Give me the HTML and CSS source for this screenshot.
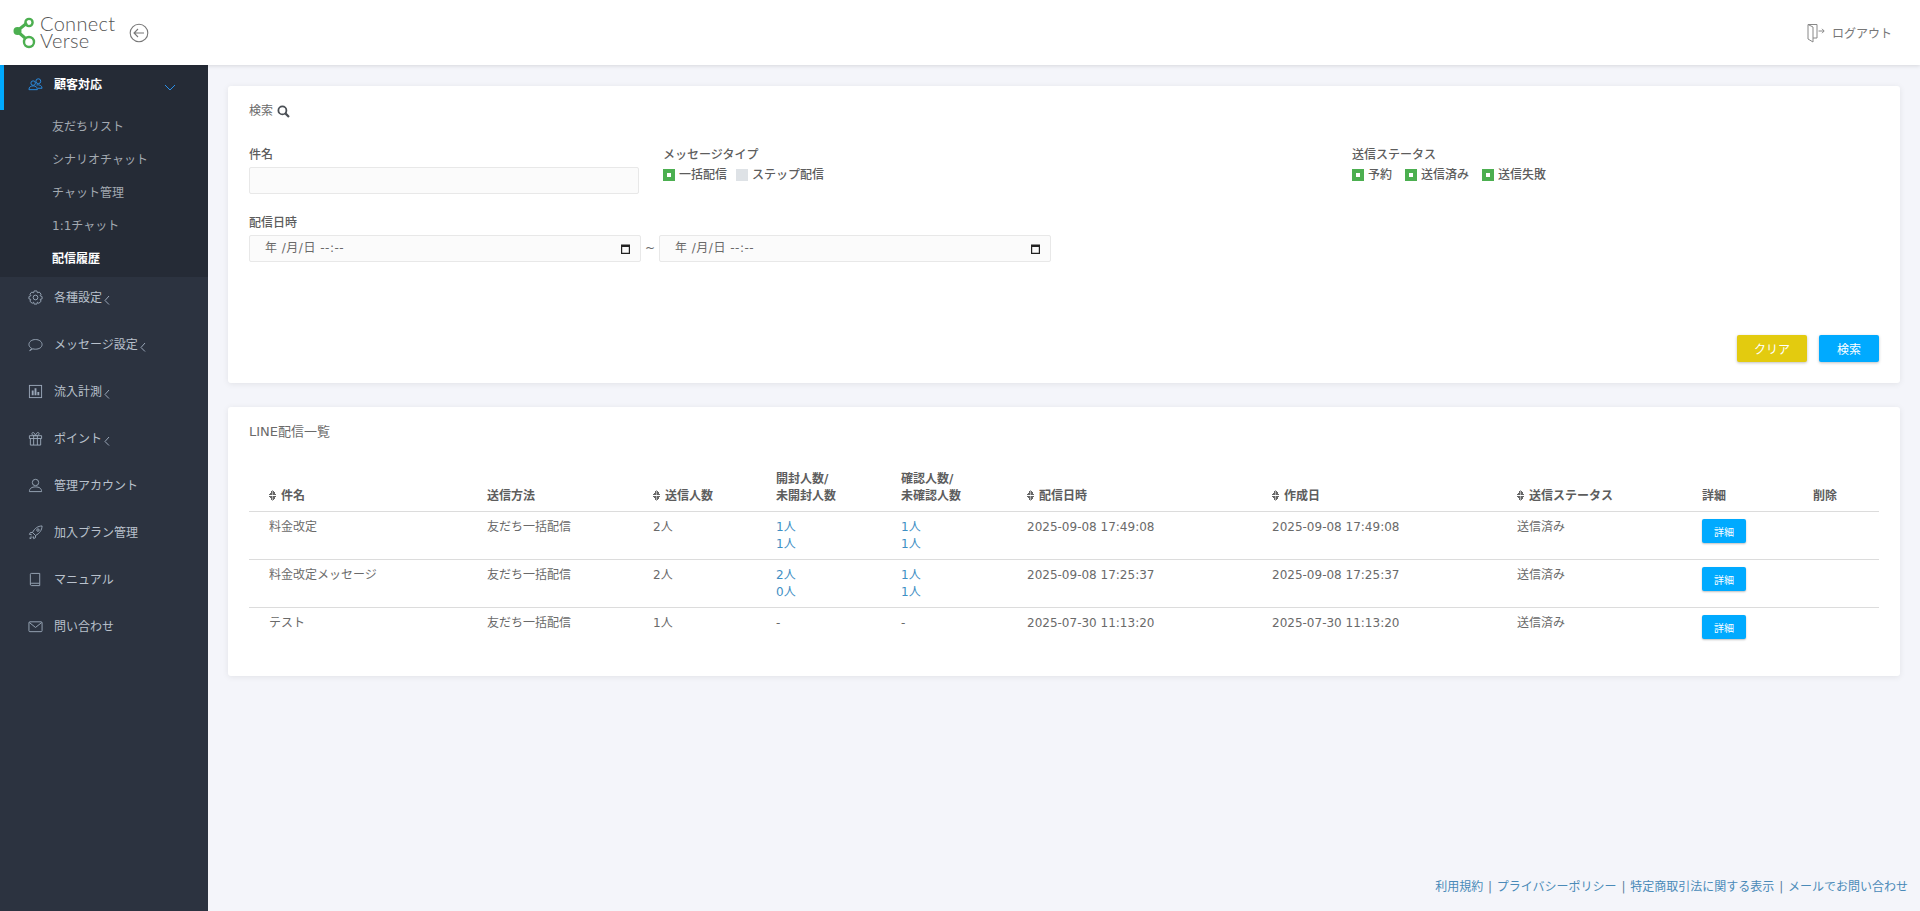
FILE: index.html
```html
<!DOCTYPE html>
<html lang="ja">
<head>
    <meta charset="UTF-8">
    <meta name="viewport" content="width=device-width, initial-scale=1.0">
    <title>配信履歴</title>
    <link rel="stylesheet" href="styles.css">
</head>
<body>

    <header class="topbar">
        <div class="brand">
            <svg class="brand-mark" width="24" height="32" viewBox="0 0 24 32" fill="none">
                <path d="M4 14 L14 6 M4 14 L12 21" stroke="#4caf50" stroke-width="3"/>
                <circle cx="4.5" cy="14" r="4" fill="#4caf50"/>
                <circle cx="16" cy="5.5" r="3.6" stroke="#4caf50" stroke-width="2.4"/>
                <circle cx="16" cy="25" r="5" stroke="#4caf50" stroke-width="2.4"/>
            </svg>
            <div class="brand-name"><span>Connect</span><span>Verse</span></div>
            <svg class="back-icon" width="20" height="20" viewBox="0 0 20 20" fill="none" stroke="#777" stroke-width="1.1">
                <circle cx="10" cy="10" r="8.8"/>
                <path d="M15 10 H5 M9 6 L5 10 L9 14"/>
            </svg>
        </div>
        <a class="logout">
            <svg width="18" height="20" viewBox="0 0 18 20" fill="none" stroke="#888" stroke-width="1">
                <path d="M1 1.5 H10 V15 H6 M1 1.5 V16 L6 19 V4 L1 1.5"/>
                <path d="M11.5 8 H17 M15 5.8 L17.2 8 L15 10.2"/>
            </svg>
            <span>ログアウト</span>
        </a>
    </header>

    <div class="layout">
        <!-- Sidebar -->
        <nav class="sidebar">
            <div class="menu-open">
                <a class="menu-item active">
                    <svg class="menu-icon" viewBox="0 0 16 16" fill="none" stroke="#2a8fe8" stroke-width="1"><circle cx="5.5" cy="6.5" r="2.4"/><circle cx="11" cy="4.5" r="2.6"/><path d="M1 13.5 C1 10.5 3 9.5 5.5 9.5 C8 9.5 10 10.5 10 13.5 Z M9 8.5 C12 7.8 15 9 15 12 H10.5"/></svg>
                    <span>顧客対応</span>
                    <svg class="chevron-down" width="12" height="7" viewBox="0 0 12 7" fill="none" stroke="#2a8fe8"><path d="M1 1 L6 6 L11 1"/></svg>
                </a>
                <ul class="submenu">
                    <li>友だちリスト</li>
                    <li>シナリオチャット</li>
                    <li>チャット管理</li>
                    <li>1:1チャット</li>
                    <li class="current">配信履歴</li>
                </ul>
            </div>
            <a class="menu-item">
                <svg class="menu-icon" viewBox="0 0 16 16" fill="none" stroke="#9aa7b8"><path d="M6.5 1 H9.5 L10 3 L12 2.2 L14 4.5 L12.8 6 L15 7 V9.5 L13 10 L14 12 L11.5 14.2 L10 13 L9.5 15 H6.5 L6 13 L4.5 14.2 L2 12 L3 10 L1 9.5 V7 L3.2 6 L2 4.5 L4 2.2 L6 3 Z"/><circle cx="8" cy="8" r="2.5"/></svg>
                <span>各種設定</span>
                <svg class="chevron-left" width="6" height="10" viewBox="0 0 6 10" fill="none" stroke="#9aa7b8"><path d="M5 1 L1 5.5 L5 9.5"/></svg>
            </a>
            <a class="menu-item">
                <svg class="menu-icon" viewBox="0 0 16 16" fill="none" stroke="#9aa7b8"><path d="M4 12.2 C2 11.2 1 9.6 1 8 C1 5 4 2.7 8 2.7 C12 2.7 15 5 15 8 C15 11 12 13 8 13 C7 13 6 12.9 5.2 12.6 L1.8 14.6 Z"/></svg>
                <span>メッセージ設定</span>
                <svg class="chevron-left" width="6" height="10" viewBox="0 0 6 10" fill="none" stroke="#9aa7b8"><path d="M5 1 L1 5.5 L5 9.5"/></svg>
            </a>
            <a class="menu-item">
                <svg class="menu-icon" viewBox="0 0 16 16" fill="none" stroke="#9aa7b8"><rect x="1.5" y="1.5" width="13" height="13"/><path d="M5 12 V7 M8 12 V4.5 M11 12 V8.5" stroke-width="2"/></svg>
                <span>流入計測</span>
                <svg class="chevron-left" width="6" height="10" viewBox="0 0 6 10" fill="none" stroke="#9aa7b8"><path d="M5 1 L1 5.5 L5 9.5"/></svg>
            </a>
            <a class="menu-item">
                <svg class="menu-icon" viewBox="0 0 16 16" fill="none" stroke="#9aa7b8"><path d="M1.5 5 H14.5 V8 H1.5 Z M2.5 8 V15 H13.5 V8 M6 5 V15 M10 5 V15 M8 5 C5 5 3.5 3.5 4.5 2 C5.5 0.8 7.5 2.5 8 5 C8.5 2.5 10.5 0.8 11.5 2 C12.5 3.5 11 5 8 5 Z"/></svg>
                <span>ポイント</span>
                <svg class="chevron-left" width="6" height="10" viewBox="0 0 6 10" fill="none" stroke="#9aa7b8"><path d="M5 1 L1 5.5 L5 9.5"/></svg>
            </a>
            <a class="menu-item">
                <svg class="menu-icon" viewBox="0 0 16 16" fill="none" stroke="#9aa7b8"><circle cx="8" cy="4.8" r="3.4"/><path d="M1.5 14.5 C1.5 11 4 9.5 8 9.5 C12 9.5 14.5 11 14.5 14.5 Z"/></svg>
                <span>管理アカウント</span>
            </a>
            <a class="menu-item">
                <svg class="menu-icon" viewBox="0 0 16 16" fill="none" stroke="#9aa7b8"><path d="M15 1 C10.5 1.2 7 3.5 4.8 8 L8 11.2 C12.5 9 14.8 5.5 15 1 Z"/><circle cx="10.6" cy="5.4" r="1.3"/><path d="M4.8 8 L2.5 8 L1.5 10 L4 10.5 M8 11.2 L8 13.5 L6 14.5 L5.5 12 M3.5 12 C2.5 12.5 2 14 2 14.5 C3 14.5 4 14 4.5 13"/></svg>
                <span>加入プラン管理</span>
            </a>
            <a class="menu-item">
                <svg class="menu-icon" viewBox="0 0 16 16" fill="none" stroke="#9aa7b8"><path d="M2.5 13 V2.5 C2.5 1.8 3 1.5 3.5 1.5 H12.5 V12 H3.8 C3 12 2.5 12.5 2.5 13 C2.5 13.8 3 14.5 3.8 14.5 H12.5 V12"/></svg>
                <span>マニュアル</span>
            </a>
            <a class="menu-item">
                <svg class="menu-icon" viewBox="0 0 16 16" fill="none" stroke="#9aa7b8"><rect x="1" y="3" width="14" height="10.5" rx="1"/><path d="M1.5 3.8 L8 9 L14.5 3.8"/></svg>
                <span>問い合わせ</span>
            </a>
        </nav>

        <main class="content">
            <!-- Search -->
            <section class="card search-card">
                <div class="search-title">
                    <span>検索</span>
                    <svg width="13" height="13" viewBox="0 0 13 13" fill="none" stroke="#4a4f55" stroke-width="1.8"><circle cx="5.4" cy="5.4" r="4"/><path d="M8.4 8.4 L12 12" stroke-width="2.2"/></svg>
                </div>
                <div class="search-grid">
                    <div class="field">
                        <label class="field-label">件名</label>
                        <input class="text-input" type="text">
                    </div>
                    <div class="field">
                        <label class="field-label">メッセージタイプ</label>
                        <div class="checks">
                            <span class="check on">一括配信</span>
                            <span class="check">ステップ配信</span>
                        </div>
                    </div>
                    <div class="field">
                        <label class="field-label">送信ステータス</label>
                        <div class="checks wide">
                            <span class="check on">予約</span>
                            <span class="check on">送信済み</span>
                            <span class="check on">送信失敗</span>
                        </div>
                    </div>
                </div>
                <div class="field date-field">
                    <label class="field-label">配信日時</label>
                    <div class="date-range">
                        <div class="date-input"><span>年 /月/日 --:--</span><svg width="9" height="10" viewBox="0 0 9 10"><path fill="#222" d="M0 0.5 H9 V10 H0 Z M1.2 3 V8.8 H7.8 V3 Z"/></svg></div>
                        <span class="tilde">~</span>
                        <div class="date-input"><span>年 /月/日 --:--</span><svg width="9" height="10" viewBox="0 0 9 10"><path fill="#222" d="M0 0.5 H9 V10 H0 Z M1.2 3 V8.8 H7.8 V3 Z"/></svg></div>
                    </div>
                </div>
                <div class="actions">
                    <button class="btn btn-clear">クリア</button>
                    <button class="btn btn-search">検索</button>
                </div>
            </section>

            <!-- List -->
            <section class="card list-card">
                <h2 class="list-title">LINE配信一覧</h2>
                <table class="list-table">
                    <colgroup>
                        <col class="c-name"><col class="c-method"><col class="c-sent"><col class="c-open"><col class="c-read"><col class="c-date"><col class="c-date"><col class="c-status"><col class="c-detail"><col class="c-delete">
                    </colgroup>
                    <thead>
                        <tr>
                            <th><i class="sort"></i>件名</th>
                            <th>送信方法</th>
                            <th><i class="sort"></i>送信人数</th>
                            <th>開封人数/<br>未開封人数</th>
                            <th>確認人数/<br>未確認人数</th>
                            <th><i class="sort"></i>配信日時</th>
                            <th><i class="sort"></i>作成日</th>
                            <th><i class="sort"></i>送信ステータス</th>
                            <th>詳細</th>
                            <th>削除</th>
                        </tr>
                    </thead>
                    <tbody>
                        <tr>
                            <td>料金改定</td>
                            <td>友だち一括配信</td>
                            <td>2人</td>
                            <td class="link">1人<br>1人</td>
                            <td class="link">1人<br>1人</td>
                            <td>2025-09-08 17:49:08</td>
                            <td>2025-09-08 17:49:08</td>
                            <td>送信済み</td>
                            <td><button class="btn-detail">詳細</button></td>
                            <td></td>
                        </tr>
                        <tr>
                            <td>料金改定メッセージ</td>
                            <td>友だち一括配信</td>
                            <td>2人</td>
                            <td class="link">2人<br>0人</td>
                            <td class="link">1人<br>1人</td>
                            <td>2025-09-08 17:25:37</td>
                            <td>2025-09-08 17:25:37</td>
                            <td>送信済み</td>
                            <td><button class="btn-detail">詳細</button></td>
                            <td></td>
                        </tr>
                        <tr>
                            <td>テスト</td>
                            <td>友だち一括配信</td>
                            <td>1人</td>
                            <td>-</td>
                            <td>-</td>
                            <td>2025-07-30 11:13:20</td>
                            <td>2025-07-30 11:13:20</td>
                            <td>送信済み</td>
                            <td><button class="btn-detail">詳細</button></td>
                            <td></td>
                        </tr>
                    </tbody>
                </table>
            </section>

            <footer class="footer">
                <a>利用規約</a> | <a>プライバシーポリシー</a> | <a>特定商取引法に関する表示</a> | <a>メールでお問い合わせ</a>
            </footer>
        </main>
    </div>

</body>
</html>
```

FILE: styles.css
```css
* {
    box-sizing: border-box;
}

body {
    font-family: 'DejaVu Sans', 'Noto Sans CJK JP', sans-serif;
    font-size: 12px;
    line-height: 17px;
    margin: 0;
    color: #6a6a6a;
    background-color: #f4f5fa;
    height: 911px;
    overflow: hidden;
}

/* Top bar */
.topbar {
    position: relative;
    z-index: 5;
    height: 65px;
    display: flex;
    align-items: center;
    justify-content: space-between;
    padding: 0 28px 0 13px;
    background-color: #fff;
    box-shadow: 0 1px 4px rgba(0, 0, 0, 0.12);
}

.brand {
    display: flex;
    align-items: center;
}

.brand-name {
    margin: 0 0 2px 3px;
    font-family: 'Lato', 'Noto Sans', sans-serif;
    font-weight: 300;
    font-size: 20px;
    letter-spacing: 0.3px;
    color: #555;
}

.brand-name span {
    display: block;
    line-height: 17px;
}

.back-icon {
    margin-left: 14px;
}

.logout {
    display: flex;
    align-items: center;
    gap: 7px;
    color: #777;
}

.logout span {
    padding-top: 4px;
}

/* Sidebar */
.layout {
    display: flex;
    height: 846px;
}

.sidebar {
    width: 208px;
    flex-shrink: 0;
    background-color: #2c3340;
    color: #b9c1cc;
}

.menu-open {
    background-color: #252b36;
    padding-bottom: 2px;
}

.menu-item {
    height: 47px;
    display: flex;
    align-items: center;
    padding: 0 0 4px 28px;
}

.menu-icon {
    width: 15px;
    height: 15px;
    flex-shrink: 0;
    margin: 0 11px 2px 0;
}

.menu-item.active {
    height: 45px;
    color: #fff;
    font-weight: 700;
    border-left: 4px solid #00aaff;
    padding-left: 24px;
}

.chevron-left {
    margin-left: 2px;
    margin-top: 3px;
}

.chevron-down {
    margin-left: 62px;
    margin-top: 3px;
}

.submenu {
    list-style: none;
    margin: 0;
    padding: 0;
    color: #a3a9b1;
}

.submenu li {
    height: 33px;
    line-height: 35px;
    padding-left: 52px;
}

.submenu .current {
    color: #fff;
    font-weight: 700;
}

/* Main column */
.content {
    flex: 1;
    display: flex;
    flex-direction: column;
    padding: 21px 20px 15px;
}

.card {
    background-color: #fff;
    border-radius: 3px;
    box-shadow: 0 1px 6px rgba(0, 0, 0, 0.08);
    padding: 15px 21px 21px;
}

.search-title {
    display: flex;
    align-items: center;
    gap: 4px;
    height: 20px;
}

.search-grid {
    display: grid;
    grid-template-columns: 414px 689px 1fr;
    margin-top: 24px;
}

.field-label {
    display: block;
    line-height: 20px;
    font-weight: 500;
    color: #5d5d5d;
}

.text-input {
    display: block;
    width: 390px;
    height: 27px;
    margin-top: 2px;
    background-color: #fbfbfb;
    border: 1px solid #e8e8e8;
    border-radius: 2px;
}

.checks {
    display: flex;
    gap: 9px;
    margin-top: 1px;
    line-height: 18px;
    font-weight: 500;
    color: #5d5d5d;
}

.checks.wide {
    gap: 13px;
}

.check {
    display: flex;
    align-items: center;
}

.check::before {
    content: "";
    box-sizing: border-box;
    width: 12px;
    height: 12px;
    margin-right: 4px;
    background-color: #dee2e6;
}

.check.on::before {
    background-color: #fff;
    border: 4px solid #4caf50;
}

.date-field {
    margin-top: 19px;
}

.date-range {
    display: flex;
    align-items: center;
    margin-top: 2px;
}

.date-input {
    width: 392px;
    height: 27px;
    display: flex;
    align-items: center;
    justify-content: space-between;
    padding: 0 10px 0 15px;
    background-color: #fbfbfb;
    border: 1px solid #e8e8e8;
    border-radius: 2px;
    color: #6a6a6a;
    letter-spacing: 0.5px;
}

.tilde {
    width: 18px;
    text-align: center;
}

.actions {
    display: flex;
    justify-content: flex-end;
    gap: 12px;
    margin-top: 73px;
}

.btn {
    height: 27px;
    border: none;
    border-radius: 2px;
    color: #fff;
    font-family: inherit;
    font-size: 12px;
    box-shadow: 0 1px 3px rgba(0, 0, 0, 0.25);
}

.btn-clear {
    width: 70px;
    background-color: #e3cb0f;
}

.btn-search {
    width: 60px;
    background-color: #00aaff;
}

/* List table */
.list-card {
    margin-top: 24px;
    padding-bottom: 20px;
}

.list-title {
    margin: 0;
    font-size: 13px;
    font-weight: 400;
    line-height: 19px;
}

.list-table {
    width: 1630px;
    margin-top: 30px;
    border-collapse: collapse;
    table-layout: fixed;
}

.c-name { width: 218px; }
.c-method { width: 166px; }
.c-sent { width: 123px; }
.c-open { width: 125px; }
.c-read { width: 126px; }
.c-date { width: 245px; }
.c-status { width: 185px; }
.c-detail { width: 111px; }
.c-delete { width: 86px; }

.list-table th {
    padding: 0 0 6px 20px;
    text-align: left;
    vertical-align: bottom;
    font-weight: 700;
    color: #5d5d5d;
    border-bottom: 1px solid #dcdcdc;
}

.list-table td {
    height: 48px;
    padding: 7px 0 6px 20px;
    vertical-align: top;
    border-bottom: 1px solid #dcdcdc;
}

.list-table tr:last-child td {
    border-bottom: none;
}

.list-table .link {
    color: #3f8fc4;
}

.sort {
    display: inline-block;
    width: 7px;
    height: 11px;
    margin-right: 5px;
    vertical-align: -1px;
    background:
        linear-gradient(to bottom right, transparent 50%, #666 50%) 0 0 / 3.5px 5px no-repeat,
        linear-gradient(to bottom left, transparent 50%, #666 50%) 3.5px 0 / 3.5px 5px no-repeat,
        linear-gradient(to top right, transparent 50%, #666 50%) 0 6px / 3.5px 5px no-repeat,
        linear-gradient(to top left, transparent 50%, #666 50%) 3.5px 6px / 3.5px 5px no-repeat;
}

.btn-detail {
    display: block;
    width: 44px;
    height: 24px;
    padding: 0;
    border: none;
    border-radius: 2px;
    background-color: #00aaff;
    color: #fff;
    font-family: inherit;
    font-size: 10px;
    box-shadow: 0 1px 2px rgba(0, 0, 0, 0.25);
}

.footer {
    margin-top: auto;
    margin-right: -8px;
    text-align: right;
    color: #5d7f9e;
    word-spacing: 1px;
}

.footer a {
    color: #4a8ab8;
}
```
